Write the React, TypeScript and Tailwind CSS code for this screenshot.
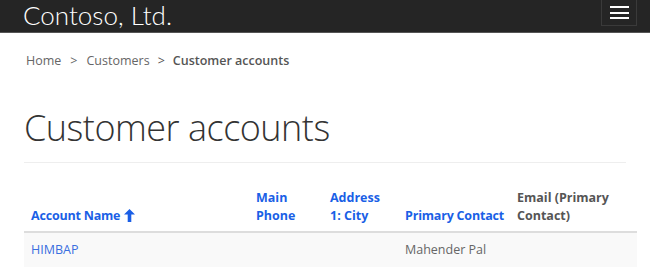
const ArrowUpBold = () => (
  <svg width="11" height="13" viewBox="0 0 11 13" fill="currentColor" aria-hidden="true">
    <path d="M5.5 0 L11 5.6 L7.3 5.6 L7.3 13 L3.7 13 L3.7 5.6 L0 5.6 Z" />
  </svg>
);

export default function App() {
  return (
    <div className="h-[267px] w-[650px] overflow-hidden bg-white font-['Open_Sans',sans-serif]">
      <header className="flex h-[33px] items-start justify-between border-b border-[#555] bg-[#252525] pl-[23px] pr-[13px]">
        <span className="font-['Lato',sans-serif] text-[26px] font-light leading-[31px] text-white">Contoso, Ltd.</span>
        <button className="flex h-[26px] w-[36px] flex-col items-center justify-center gap-[3.5px] border border-t-0 border-[#3a3a3a]">
          <span className="block h-[2px] w-[19px] bg-white" />
          <span className="block h-[2px] w-[19px] bg-white" />
          <span className="block h-[2px] w-[19px] bg-white" />
        </button>
      </header>

      <div className="px-[24px]">
        <nav className="flex items-center pl-[2px] pt-[19px] text-[12.5px] text-[#666]">
          <span>Home</span>
          <span className="px-[9px]">&gt;</span>
          <span>Customers</span>
          <span className="px-[8px] text-[#555]">&gt;</span>
          <span className="font-semibold text-[#555]">Customer accounts</span>
        </nav>

        <h1 className="mt-[35px] pb-[12px] text-[36px] font-light leading-[44px] tracking-[-0.5px] text-[#333]">
          Customer accounts
        </h1>
        <div className="h-px bg-[#eee]" />

        <table className="mt-[26px] w-[613px] table-fixed border-collapse text-[12.5px]">
          <thead>
            <tr className="border-b-2 border-[#ddd] align-bottom font-semibold text-[#1a5fe6]">
              <th className="w-[225px] px-[7px] pb-[6px] text-left leading-[18px]">
                <span className="inline-flex items-center gap-[4px] tracking-[-0.2px]">
                  Account Name <ArrowUpBold />
                </span>
              </th>
              <th className="w-[74px] px-[7px] pb-[6px] text-left leading-[18px]">Main Phone</th>
              <th className="w-[75px] px-[7px] pb-[6px] text-left leading-[18px]">Address 1: City</th>
              <th className="w-[112px] whitespace-nowrap px-[7px] pb-[6px] text-left leading-[18px] tracking-[-0.2px]">
                Primary Contact
              </th>
              <th className="px-[7px] pb-[6px] text-left leading-[18px] text-[#555]">Email (Primary Contact)</th>
            </tr>
          </thead>
          <tbody>
            <tr className="bg-[#f9f9f9]">
              <td className="px-[7px] py-[8px] text-[#3a6fe0]">HIMBAP</td>
              <td className="px-[7px]" />
              <td className="px-[7px]" />
              <td className="px-[7px] text-[#666]">Mahender Pal</td>
              <td className="px-[7px]" />
            </tr>
          </tbody>
        </table>
      </div>
    </div>
  );
}
